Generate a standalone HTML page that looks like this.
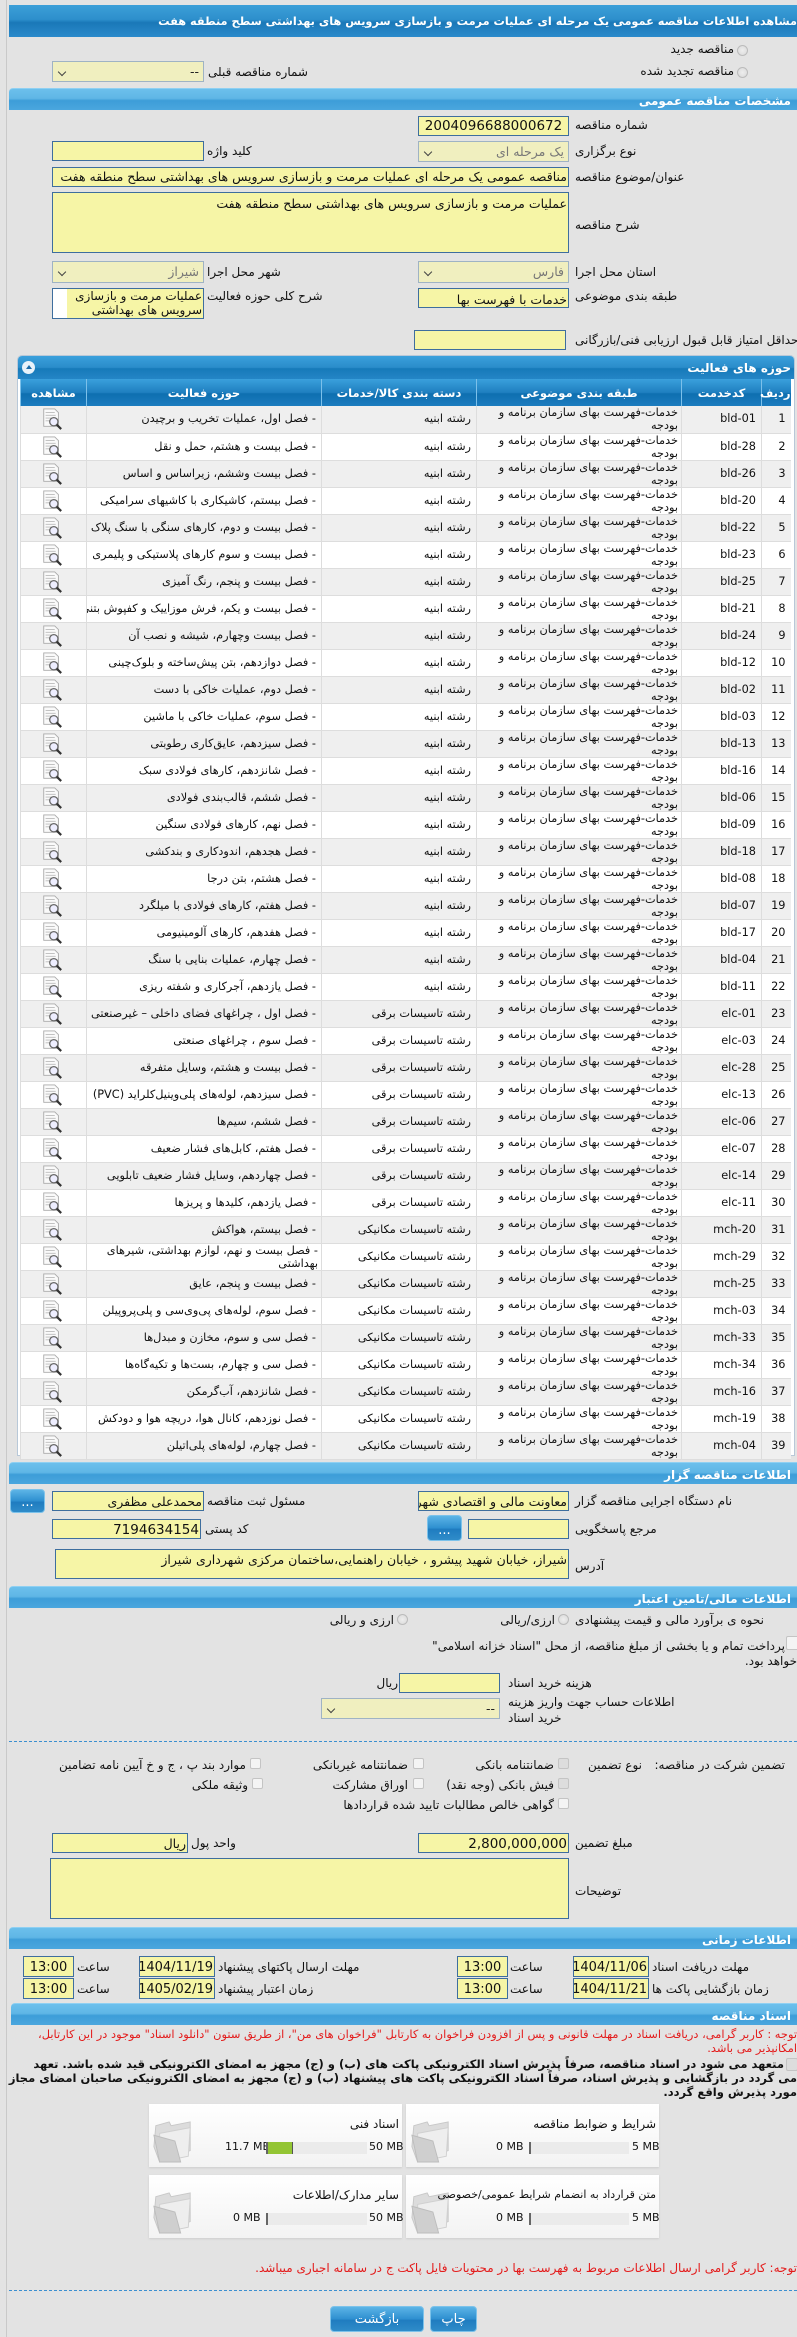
<!DOCTYPE html>
<html><head><meta charset="utf-8">
<style>
*{box-sizing:border-box;margin:0;padding:0}
body{width:797px;height:2337px;background:#e3e3e3;font-family:"DejaVu Sans",sans-serif;font-size:12px;color:#111;position:relative;overflow:hidden}
.a{position:absolute}
.vl{position:absolute;left:6px;top:0;width:1px;height:2337px;background:#c9c9c9}
.bar{position:absolute;left:9px;right:0;height:22px;background:linear-gradient(#6cc0ec 0%,#5fb6e6 45%,#3d9dd8 55%,#4aa6de 100%);border-top:1px solid #8fd0f2;border-radius:4px 0 0 0;color:#fff;font-weight:bold;font-size:12px;direction:rtl;text-align:right;padding-right:6px;line-height:24px}
.tbar{position:absolute;left:9px;right:0;top:5px;height:32px;background:linear-gradient(#3c9fd8 0%,#2d8fcc 45%,#1a78b8 55%,#2a8acb 100%);color:#fff;font-weight:bold;font-size:11.3px;direction:rtl;text-align:right;line-height:34px;white-space:nowrap;overflow:hidden}
.in{position:absolute;background:#f6f5a6;border:1px solid #3e6e9e;direction:rtl;text-align:right;font-size:12.5px;line-height:18px;padding:0 1px;white-space:nowrap;overflow:hidden}
.sel{position:absolute;background:#f0efbf;border:1px solid #9fb3c4;direction:rtl;text-align:right;font-size:12.5px;line-height:20px;padding-right:4px;color:#777;white-space:nowrap}
.sel:after{content:"";position:absolute;left:6px;top:7px;width:5px;height:5px;border-right:1.5px solid #444;border-bottom:1.5px solid #444;transform:rotate(45deg)}
.lb{position:absolute;direction:rtl;white-space:nowrap;font-size:12px}
.ltr{direction:ltr}
.rd{position:absolute;width:11px;height:11px;border-radius:50%;border:1px solid #bbb;background:radial-gradient(#eee,#d8d8d8)}
.cb{position:absolute;width:11px;height:11px;border:1px solid #c4c4c4;background:#f4f4f4;border-radius:2px}
.btn{position:absolute;background:linear-gradient(#5cb4e6,#2e8fd0 50%,#1f7cc0 55%,#2f8cc9);border:1px solid #7cc2ea;border-radius:4px;color:#fff;text-align:center;font-size:13px}
table{position:absolute;left:20px;top:379px;width:770px;border-collapse:collapse;table-layout:fixed;direction:rtl;font-size:11.3px}
th{height:23px;background:linear-gradient(#3aa0dc,#1f7fc0 50%,#0e6fb0 55%,#1c7cbf);color:#fff;font-weight:bold;border-left:1px solid #7cc0ea;font-size:11.5px;padding:0}
tr{height:27px}
td{height:27px;border-left:1px solid #ddd;border-bottom:1px solid #ddd;vertical-align:middle;text-align:right;padding:0 5px;white-space:nowrap;overflow:hidden;line-height:14px}
tr:nth-child(odd) td{background:#fff}
tr:nth-child(even) td{background:#efefef}
td.c{line-height:13px;vertical-align:top;padding-top:0;padding-right:3px}
td.ic{padding:0}
td.ic svg{display:block;margin:0 auto 0 20px}
.fl{position:absolute;width:253px;height:63px;background:linear-gradient(#fff,#f3f3f3);box-shadow:0 1px 2px #ccc}
.pb{position:absolute;height:12px;background:#ebebeb;border-left:2px solid #666}
.dash{position:absolute;left:9px;right:0;height:0;border-top:1px dashed #3b8fd0}
.red{color:#e31b1b}
.dt{font-size:13px;line-height:21px;text-align:center}
</style></head><body>
<div class="vl"></div>
<div class="tbar">مشاهده اطلاعات مناقصه عمومی یک مرحله ای عملیات مرمت و بازسازی سرویس های بهداشتی سطح منطقه هفت</div>

<div class="rd" style="left:737px;top:45px"></div><div class="lb" style="right:63px;top:42px">مناقصه جدید</div>
<div class="rd" style="left:737px;top:67px"></div><div class="lb" style="right:63px;top:64px">مناقصه تجدید شده</div>
<div class="sel" style="left:52px;top:61px;width:152px;height:21px;color:#222">--</div>
<div class="lb" style="left:208px;top:65px">شماره مناقصه قبلی</div>

<div class="bar" style="top:88px">مشخصات مناقصه عمومی</div>
<div class="in" style="left:418px;top:116px;width:151px;height:20px;text-align:center;font-size:13.5px">2004096688000672</div>
<div class="lb" style="left:575px;top:118px">شماره مناقصه</div>
<div class="sel" style="left:418px;top:141px;width:151px;height:21px">یک مرحله ای</div>
<div class="lb" style="left:575px;top:144px">نوع برگزاری</div>
<div class="in" style="left:52px;top:141px;width:152px;height:20px"></div>
<div class="lb" style="left:207px;top:144px">کلید واژه</div>
<div class="in" style="left:52px;top:167px;width:517px;height:20px">مناقصه عمومی یک مرحله ای عملیات مرمت و بازسازی سرویس های بهداشتی سطح منطقه هفت</div>
<div class="lb" style="left:575px;top:170px">عنوان/موضوع مناقصه</div>
<div class="in" style="left:52px;top:192px;width:517px;height:61px;line-height:22px">عملیات مرمت و بازسازی سرویس های بهداشتی سطح منطقه هفت</div>
<div class="lb" style="left:575px;top:218px">شرح مناقصه</div>
<div class="sel" style="left:418px;top:261px;width:151px;height:22px">فارس</div>
<div class="lb" style="left:575px;top:265px">استان محل اجرا</div>
<div class="sel" style="left:52px;top:261px;width:152px;height:22px">شیراز</div>
<div class="lb" style="left:207px;top:265px">شهر محل اجرا</div>
<div class="in" style="left:418px;top:288px;width:151px;height:20px;line-height:22px">خدمات با فهرست بها</div>
<div class="lb" style="left:575px;top:289px">طبقه بندی موضوعی</div>
<div class="in" style="left:52px;top:288px;width:152px;height:31px;line-height:14px;white-space:normal;padding-left:16px;font-size:12px;background:linear-gradient(90deg,#fff 0 14px,#f6f5a6 14px)">عملیات مرمت و بازسازی سرویس های بهداشتی</div>
<div class="lb" style="left:207px;top:289px">شرح کلی حوزه فعالیت</div>
<div class="in" style="left:414px;top:330px;width:152px;height:20px"></div>
<div class="lb" style="left:575px;top:333px">حداقل امتیاز قابل قبول ارزیابی فنی/بازرگانی</div>

<div class="a" style="left:17px;top:355px;width:778px;height:1101px;border:1px solid #b8c8d8;border-radius:5px 5px 0 0;background:#fff"></div>
<div class="a" style="left:18px;top:356px;width:776px;height:23px;background:linear-gradient(#3aa0dc,#2a8cca 50%,#167ab9 55%,#2485c6);border-radius:4px 4px 0 0;color:#fff;font-weight:bold;font-size:12px;direction:rtl;text-align:right;padding-right:3px;line-height:24px">حوزه های فعالیت</div>
<div class="a" style="left:22px;top:361px;width:13px;height:13px;border-radius:50%;background:#e8f2fa"><div class="a" style="left:4px;top:4px;width:0;height:0;border-left:3px solid transparent;border-right:3px solid transparent;border-bottom:4px solid #1a6aa8"></div></div>
<svg width="0" height="0" style="position:absolute"><defs><symbol id="ico" viewBox="0 0 24 26"><path d="M3 2h12l4 4v15H3z" fill="#fafafa" stroke="#aaa"/><path d="M5 6h10M5 9h11M5 12h8M5 15h6" stroke="#bbb"/><circle cx="14" cy="16" r="4.5" fill="#eef" stroke="#666" stroke-width="1.4"/><path d="M17 19l5 5" stroke="#333" stroke-width="2.4"/></symbol></defs></svg>
<table>
<colgroup><col style="width:29px"><col style="width:80px"><col style="width:205px"><col style="width:155px"><col style="width:235px"><col style="width:66px"></colgroup>
<tr><th>ردیف</th><th>کدخدمت</th><th>طبقه بندی موضوعی</th><th>دسته بندی کالا/خدمات</th><th>حوزه فعالیت</th><th>مشاهده</th></tr>
<tr><td>1</td><td>bld-01</td><td class="c">خدمات-فهرست بهای سازمان برنامه و<br>بودجه</td><td>رشته ابنیه</td><td>- فصل اول، عملیات تخریب و برچیدن</td><td class="ic"><svg width="22" height="24"><use href="#ico"/></svg></td></tr>
<tr><td>2</td><td>bld-28</td><td class="c">خدمات-فهرست بهای سازمان برنامه و<br>بودجه</td><td>رشته ابنیه</td><td>- فصل بیست و هشتم، حمل و نقل</td><td class="ic"><svg width="22" height="24"><use href="#ico"/></svg></td></tr>
<tr><td>3</td><td>bld-26</td><td class="c">خدمات-فهرست بهای سازمان برنامه و<br>بودجه</td><td>رشته ابنیه</td><td>- فصل بیست وششم، زیراساس و اساس</td><td class="ic"><svg width="22" height="24"><use href="#ico"/></svg></td></tr>
<tr><td>4</td><td>bld-20</td><td class="c">خدمات-فهرست بهای سازمان برنامه و<br>بودجه</td><td>رشته ابنیه</td><td>- فصل بیستم، کاشیکاری با کاشیهای سرامیکی</td><td class="ic"><svg width="22" height="24"><use href="#ico"/></svg></td></tr>
<tr><td>5</td><td>bld-22</td><td class="c">خدمات-فهرست بهای سازمان برنامه و<br>بودجه</td><td>رشته ابنیه</td><td>- فصل بیست و دوم، کارهای سنگی با سنگ پلاک</td><td class="ic"><svg width="22" height="24"><use href="#ico"/></svg></td></tr>
<tr><td>6</td><td>bld-23</td><td class="c">خدمات-فهرست بهای سازمان برنامه و<br>بودجه</td><td>رشته ابنیه</td><td>- فصل بیست و سوم کارهای پلاستیکی و پلیمری</td><td class="ic"><svg width="22" height="24"><use href="#ico"/></svg></td></tr>
<tr><td>7</td><td>bld-25</td><td class="c">خدمات-فهرست بهای سازمان برنامه و<br>بودجه</td><td>رشته ابنیه</td><td>- فصل بیست و پنجم، رنگ آمیزی</td><td class="ic"><svg width="22" height="24"><use href="#ico"/></svg></td></tr>
<tr><td>8</td><td>bld-21</td><td class="c">خدمات-فهرست بهای سازمان برنامه و<br>بودجه</td><td>رشته ابنیه</td><td>- فصل بیست و یکم، فرش موزاییک و کفپوش بتنی</td><td class="ic"><svg width="22" height="24"><use href="#ico"/></svg></td></tr>
<tr><td>9</td><td>bld-24</td><td class="c">خدمات-فهرست بهای سازمان برنامه و<br>بودجه</td><td>رشته ابنیه</td><td>- فصل بیست وچهارم، شیشه و نصب آن</td><td class="ic"><svg width="22" height="24"><use href="#ico"/></svg></td></tr>
<tr><td>10</td><td>bld-12</td><td class="c">خدمات-فهرست بهای سازمان برنامه و<br>بودجه</td><td>رشته ابنیه</td><td>- فصل دوازدهم، بتن پیش‌ساخته و بلوک‌چینی</td><td class="ic"><svg width="22" height="24"><use href="#ico"/></svg></td></tr>
<tr><td>11</td><td>bld-02</td><td class="c">خدمات-فهرست بهای سازمان برنامه و<br>بودجه</td><td>رشته ابنیه</td><td>- فصل دوم، عملیات خاکی با دست</td><td class="ic"><svg width="22" height="24"><use href="#ico"/></svg></td></tr>
<tr><td>12</td><td>bld-03</td><td class="c">خدمات-فهرست بهای سازمان برنامه و<br>بودجه</td><td>رشته ابنیه</td><td>- فصل سوم، عملیات خاکی با ماشین</td><td class="ic"><svg width="22" height="24"><use href="#ico"/></svg></td></tr>
<tr><td>13</td><td>bld-13</td><td class="c">خدمات-فهرست بهای سازمان برنامه و<br>بودجه</td><td>رشته ابنیه</td><td>- فصل سیزدهم، عایق‌کاری رطوبتی</td><td class="ic"><svg width="22" height="24"><use href="#ico"/></svg></td></tr>
<tr><td>14</td><td>bld-16</td><td class="c">خدمات-فهرست بهای سازمان برنامه و<br>بودجه</td><td>رشته ابنیه</td><td>- فصل شانزدهم، کارهای فولادی سبک</td><td class="ic"><svg width="22" height="24"><use href="#ico"/></svg></td></tr>
<tr><td>15</td><td>bld-06</td><td class="c">خدمات-فهرست بهای سازمان برنامه و<br>بودجه</td><td>رشته ابنیه</td><td>- فصل ششم، قالب‌بندی فولادی</td><td class="ic"><svg width="22" height="24"><use href="#ico"/></svg></td></tr>
<tr><td>16</td><td>bld-09</td><td class="c">خدمات-فهرست بهای سازمان برنامه و<br>بودجه</td><td>رشته ابنیه</td><td>- فصل نهم، کارهای فولادی سنگین</td><td class="ic"><svg width="22" height="24"><use href="#ico"/></svg></td></tr>
<tr><td>17</td><td>bld-18</td><td class="c">خدمات-فهرست بهای سازمان برنامه و<br>بودجه</td><td>رشته ابنیه</td><td>- فصل هجدهم، اندودکاری و بندکشی</td><td class="ic"><svg width="22" height="24"><use href="#ico"/></svg></td></tr>
<tr><td>18</td><td>bld-08</td><td class="c">خدمات-فهرست بهای سازمان برنامه و<br>بودجه</td><td>رشته ابنیه</td><td>- فصل هشتم، بتن درجا</td><td class="ic"><svg width="22" height="24"><use href="#ico"/></svg></td></tr>
<tr><td>19</td><td>bld-07</td><td class="c">خدمات-فهرست بهای سازمان برنامه و<br>بودجه</td><td>رشته ابنیه</td><td>- فصل هفتم، کارهای فولادی با میلگرد</td><td class="ic"><svg width="22" height="24"><use href="#ico"/></svg></td></tr>
<tr><td>20</td><td>bld-17</td><td class="c">خدمات-فهرست بهای سازمان برنامه و<br>بودجه</td><td>رشته ابنیه</td><td>- فصل هفدهم، کارهای آلومینیومی</td><td class="ic"><svg width="22" height="24"><use href="#ico"/></svg></td></tr>
<tr><td>21</td><td>bld-04</td><td class="c">خدمات-فهرست بهای سازمان برنامه و<br>بودجه</td><td>رشته ابنیه</td><td>- فصل چهارم، عملیات بنایی با سنگ</td><td class="ic"><svg width="22" height="24"><use href="#ico"/></svg></td></tr>
<tr><td>22</td><td>bld-11</td><td class="c">خدمات-فهرست بهای سازمان برنامه و<br>بودجه</td><td>رشته ابنیه</td><td>- فصل یازدهم، آجرکاری و شفته ریزی</td><td class="ic"><svg width="22" height="24"><use href="#ico"/></svg></td></tr>
<tr><td>23</td><td>elc-01</td><td class="c">خدمات-فهرست بهای سازمان برنامه و<br>بودجه</td><td>رشته تاسیسات برقی</td><td>- فصل اول ، چراغهای فضای داخلی – غیرصنعتی</td><td class="ic"><svg width="22" height="24"><use href="#ico"/></svg></td></tr>
<tr><td>24</td><td>elc-03</td><td class="c">خدمات-فهرست بهای سازمان برنامه و<br>بودجه</td><td>رشته تاسیسات برقی</td><td>- فصل سوم ، چراغهای صنعتی</td><td class="ic"><svg width="22" height="24"><use href="#ico"/></svg></td></tr>
<tr><td>25</td><td>elc-28</td><td class="c">خدمات-فهرست بهای سازمان برنامه و<br>بودجه</td><td>رشته تاسیسات برقی</td><td>- فصل بیست و هشتم، وسایل متفرقه</td><td class="ic"><svg width="22" height="24"><use href="#ico"/></svg></td></tr>
<tr><td>26</td><td>elc-13</td><td class="c">خدمات-فهرست بهای سازمان برنامه و<br>بودجه</td><td>رشته تاسیسات برقی</td><td>- فصل سیزدهم، لوله‌های پلی‌وینیل‌کلراید (PVC)</td><td class="ic"><svg width="22" height="24"><use href="#ico"/></svg></td></tr>
<tr><td>27</td><td>elc-06</td><td class="c">خدمات-فهرست بهای سازمان برنامه و<br>بودجه</td><td>رشته تاسیسات برقی</td><td>- فصل ششم، سیم‌ها</td><td class="ic"><svg width="22" height="24"><use href="#ico"/></svg></td></tr>
<tr><td>28</td><td>elc-07</td><td class="c">خدمات-فهرست بهای سازمان برنامه و<br>بودجه</td><td>رشته تاسیسات برقی</td><td>- فصل هفتم، کابل‌های فشار ضعیف</td><td class="ic"><svg width="22" height="24"><use href="#ico"/></svg></td></tr>
<tr><td>29</td><td>elc-14</td><td class="c">خدمات-فهرست بهای سازمان برنامه و<br>بودجه</td><td>رشته تاسیسات برقی</td><td>- فصل چهاردهم، وسایل فشار ضعیف تابلویی</td><td class="ic"><svg width="22" height="24"><use href="#ico"/></svg></td></tr>
<tr><td>30</td><td>elc-11</td><td class="c">خدمات-فهرست بهای سازمان برنامه و<br>بودجه</td><td>رشته تاسیسات برقی</td><td>- فصل یازدهم، کلیدها و پریزها</td><td class="ic"><svg width="22" height="24"><use href="#ico"/></svg></td></tr>
<tr><td>31</td><td>mch-20</td><td class="c">خدمات-فهرست بهای سازمان برنامه و<br>بودجه</td><td>رشته تاسیسات مکانیکی</td><td>- فصل بیستم، هواکش</td><td class="ic"><svg width="22" height="24"><use href="#ico"/></svg></td></tr>
<tr><td>32</td><td>mch-29</td><td class="c">خدمات-فهرست بهای سازمان برنامه و<br>بودجه</td><td>رشته تاسیسات مکانیکی</td><td class="c">- فصل بیست و نهم، لوازم بهداشتی، شیرهای<br>بهداشتی</td><td class="ic"><svg width="22" height="24"><use href="#ico"/></svg></td></tr>
<tr><td>33</td><td>mch-25</td><td class="c">خدمات-فهرست بهای سازمان برنامه و<br>بودجه</td><td>رشته تاسیسات مکانیکی</td><td>- فصل بیست و پنجم، عایق</td><td class="ic"><svg width="22" height="24"><use href="#ico"/></svg></td></tr>
<tr><td>34</td><td>mch-03</td><td class="c">خدمات-فهرست بهای سازمان برنامه و<br>بودجه</td><td>رشته تاسیسات مکانیکی</td><td>- فصل سوم، لوله‌های پی‌وی‌سی و پلی‌پروپیلن</td><td class="ic"><svg width="22" height="24"><use href="#ico"/></svg></td></tr>
<tr><td>35</td><td>mch-33</td><td class="c">خدمات-فهرست بهای سازمان برنامه و<br>بودجه</td><td>رشته تاسیسات مکانیکی</td><td>- فصل سی و سوم، مخازن و مبدل‌ها</td><td class="ic"><svg width="22" height="24"><use href="#ico"/></svg></td></tr>
<tr><td>36</td><td>mch-34</td><td class="c">خدمات-فهرست بهای سازمان برنامه و<br>بودجه</td><td>رشته تاسیسات مکانیکی</td><td>- فصل سی و چهارم، بست‌ها و تکیه‌گاه‌ها</td><td class="ic"><svg width="22" height="24"><use href="#ico"/></svg></td></tr>
<tr><td>37</td><td>mch-16</td><td class="c">خدمات-فهرست بهای سازمان برنامه و<br>بودجه</td><td>رشته تاسیسات مکانیکی</td><td>- فصل شانزدهم، آب‌گرمکن</td><td class="ic"><svg width="22" height="24"><use href="#ico"/></svg></td></tr>
<tr><td>38</td><td>mch-19</td><td class="c">خدمات-فهرست بهای سازمان برنامه و<br>بودجه</td><td>رشته تاسیسات مکانیکی</td><td>- فصل نوزدهم، کانال هوا، دریچه هوا و دودکش</td><td class="ic"><svg width="22" height="24"><use href="#ico"/></svg></td></tr>
<tr><td>39</td><td>mch-04</td><td class="c">خدمات-فهرست بهای سازمان برنامه و<br>بودجه</td><td>رشته تاسیسات مکانیکی</td><td>- فصل چهارم، لوله‌های پلی‌اتیلن</td><td class="ic"><svg width="22" height="24"><use href="#ico"/></svg></td></tr>
</table>

<div class="bar" style="top:1462px">اطلاعات مناقصه گزار</div>
<div class="in" style="left:418px;top:1491px;width:151px;height:20px;line-height:20px">معاونت مالی و اقتصادی شهرداری</div>
<div class="lb" style="left:575px;top:1494px">نام دستگاه اجرایی مناقصه گزار</div>
<div class="in" style="left:52px;top:1491px;width:152px;height:20px;line-height:20px">محمدعلی مظفری</div>
<div class="lb" style="left:207px;top:1494px">مسئول ثبت مناقصه</div>
<div class="btn" style="left:10px;top:1489px;width:35px;height:24px;line-height:26px">...</div>
<div class="in" style="left:468px;top:1519px;width:101px;height:20px"></div>
<div class="btn" style="left:427px;top:1515px;width:35px;height:26px;line-height:30px">...</div>
<div class="lb" style="left:575px;top:1522px">مرجع پاسخگویی</div>
<div class="in" style="left:52px;top:1519px;width:149px;height:20px;font-size:13.5px;line-height:20px">7194634154</div>
<div class="lb" style="left:205px;top:1522px">کد پستی</div>
<div class="in" style="left:55px;top:1549px;width:514px;height:30px;line-height:20px">شیراز، خیابان شهید پیشرو ، خیابان راهنمایی،ساختمان مرکزی شهرداری شیراز</div>
<div class="lb" style="left:575px;top:1559px">آدرس</div>

<div class="bar" style="top:1586px">اطلاعات مالی/تامین اعتبار</div>
<div class="lb" style="left:575px;top:1613px">نحوه ی برآورد مالی و قیمت پیشنهادی</div>
<div class="rd" style="left:558px;top:1614px"></div><div class="lb" style="right:242px;top:1613px">ارزی/ریالی</div>
<div class="rd" style="left:397px;top:1614px"></div><div class="lb" style="right:403px;top:1613px">ارزی و ریالی</div>
<div class="cb" style="left:786px;top:1636px;width:14px;height:14px"></div>
<div class="lb" style="right:12px;top:1639px">پرداخت تمام و یا بخشی از مبلغ مناقصه، از محل "اسناد خزانه اسلامی"</div>
<div class="lb" style="right:0;top:1654px">خواهد بود.</div>
<div class="in" style="left:399px;top:1673px;width:101px;height:20px"></div>
<div class="lb" style="right:399px;top:1676px">ریال</div>
<div class="lb" style="left:508px;top:1676px">هزینه خرید اسناد</div>
<div class="sel" style="left:321px;top:1698px;width:179px;height:21px;color:#222">--</div>
<div class="lb" style="left:508px;top:1695px">اطلاعات حساب جهت واریز هزینه</div>
<div class="lb" style="left:508px;top:1711px">خرید اسناد</div>
<div class="dash" style="top:1741px"></div>
<div class="lb" style="right:12px;top:1758px">تضمین شرکت در مناقصه:</div>
<div class="lb" style="right:155px;top:1758px">نوع تضمین</div>
<div class="cb" style="left:558px;top:1758px;background:#ddd"></div><div class="lb" style="right:243px;top:1758px">ضمانتنامه بانکی</div>
<div class="cb" style="left:413px;top:1758px"></div><div class="lb" style="right:389px;top:1758px">ضمانتنامه غیربانکی</div>
<div class="cb" style="left:250px;top:1758px"></div><div class="lb" style="right:551px;top:1758px">موارد بند پ ، ج و خ آیین نامه تضامین</div>
<div class="cb" style="left:558px;top:1778px;background:#ddd"></div><div class="lb" style="right:243px;top:1778px">فیش بانکی (وجه نقد)</div>
<div class="cb" style="left:413px;top:1778px"></div><div class="lb" style="right:389px;top:1778px">اوراق مشارکت</div>
<div class="cb" style="left:252px;top:1778px"></div><div class="lb" style="right:549px;top:1778px">وثیقه ملکی</div>
<div class="cb" style="left:558px;top:1798px"></div><div class="lb" style="right:243px;top:1798px">گواهی خالص مطالبات تایید شده قراردادها</div>
<div class="in" style="left:418px;top:1833px;width:151px;height:20px;font-size:13.5px;line-height:20px">2,800,000,000</div>
<div class="lb" style="left:575px;top:1836px">مبلغ تضمین</div>
<div class="in" style="left:52px;top:1833px;width:136px;height:20px;line-height:20px">ریال</div>
<div class="lb" style="left:191px;top:1836px">واحد پول</div>
<div class="in" style="left:50px;top:1858px;width:519px;height:61px"></div>
<div class="lb" style="left:575px;top:1884px">توضیحات</div>

<div class="bar" style="top:1927px">اطلاعات زمانی</div>
<div class="in dt" style="left:573px;top:1956px;width:76px;height:21px">1404/11/06</div>
<div class="lb" style="left:652px;top:1960px">مهلت دریافت اسناد</div>
<div class="lb" style="left:510px;top:1960px">ساعت</div>
<div class="in dt" style="left:457px;top:1956px;width:51px;height:21px">13:00</div>
<div class="in dt" style="left:139px;top:1956px;width:76px;height:21px">1404/11/19</div>
<div class="lb" style="left:218px;top:1960px">مهلت ارسال پاکتهای پیشنهاد</div>
<div class="lb" style="left:77px;top:1960px">ساعت</div>
<div class="in dt" style="left:23px;top:1956px;width:51px;height:21px">13:00</div>
<div class="in dt" style="left:573px;top:1978px;width:76px;height:21px">1404/11/21</div>
<div class="lb" style="left:652px;top:1982px">زمان بازگشایی پاکت ها</div>
<div class="lb" style="left:510px;top:1982px">ساعت</div>
<div class="in dt" style="left:457px;top:1978px;width:51px;height:21px">13:00</div>
<div class="in dt" style="left:139px;top:1978px;width:76px;height:21px">1405/02/19</div>
<div class="lb" style="left:218px;top:1982px">زمان اعتبار پیشنهاد</div>
<div class="lb" style="left:77px;top:1982px">ساعت</div>
<div class="in dt" style="left:23px;top:1978px;width:51px;height:21px">13:00</div>

<div class="bar" style="top:2003px;left:11px">اسناد مناقصه</div>
<div class="lb red" style="right:0;top:2027px;font-size:11.4px">توجه : کاربر گرامی، دریافت اسناد در مهلت قانونی و پس از افزودن فراخوان به کارتابل "فراخوان های من"، از طریق ستون "دانلود اسناد" موجود در این کارتابل،</div>
<div class="lb red" style="right:0;top:2041px;font-size:11.4px">امکانپذیر می باشد.</div>
<div class="cb" style="left:786px;top:2058px;width:12px;height:13px;background:#ddd"></div>
<div class="a" style="right:13px;top:2057px;width:770px;direction:rtl;text-align:right;font-weight:bold;font-size:11.5px;line-height:14px;white-space:nowrap">متعهد می شود در اسناد مناقصه، صرفاً پذیرش اسناد الکترونیکی پاکت های (ب) و (ج) مجهز به امضای الکترونیکی قید شده باشد. تعهد</div>
<div class="a" style="right:0;top:2071px;width:790px;direction:rtl;text-align:right;font-weight:bold;font-size:11.5px;line-height:14px;white-space:nowrap">می گردد در بازگشایی و پذیرش اسناد، صرفاً اسناد الکترونیکی پاکت های پیشنهاد (ب) و (ج) مجهز به امضای الکترونیکی صاحبان امضای مجاز</div>
<div class="a" style="right:0;top:2085px;direction:rtl;text-align:right;font-weight:bold;font-size:11.5px;line-height:14px;white-space:nowrap">مورد پذیرش واقع گردد.</div>

<svg width="0" height="0" style="position:absolute"><defs><symbol id="fold" viewBox="0 0 44 52"><path d="M4 10l14-4 2 4 20-4v30L8 48 2 32z" fill="#dcdcdc" stroke="#c8c8c8"/><path d="M8 18l32-6-2 30-30 6z" fill="#eee" stroke="#d0d0d0"/><path d="M2 20l22 6 6 22-22 0z" fill="#cfcfcf" stroke="#bdbdbd"/></symbol></defs></svg>
<div class="fl" style="left:149px;top:2104px"><svg class="a" style="left:3px;top:12px" width="42" height="50"><use href="#fold"/></svg><div class="lb" style="right:3px;top:13px;font-size:12px">اسناد فنی</div><div class="lb ltr" style="left:76px;top:36px;font-size:11px">11.7 MB</div><div class="pb" style="left:117px;top:38px;width:101px"><div class="a" style="left:0;top:0;width:25px;height:12px;background:#93c534;border-right:1px solid #555"></div></div><div class="lb ltr" style="left:220px;top:36px;font-size:11px">50 MB</div></div>
<div class="fl" style="left:406px;top:2104px"><svg class="a" style="left:4px;top:12px" width="42" height="50"><use href="#fold"/></svg><div class="lb" style="right:3px;top:13px;font-size:12px">شرایط و ضوابط مناقصه</div><div class="lb ltr" style="left:90px;top:36px;font-size:11px">0 MB</div><div class="pb" style="left:123px;top:38px;width:100px"></div><div class="lb ltr" style="left:226px;top:36px;font-size:11px">5 MB</div></div>
<div class="fl" style="left:149px;top:2175px"><svg class="a" style="left:3px;top:12px" width="42" height="50"><use href="#fold"/></svg><div class="lb" style="right:3px;top:13px;font-size:12px">سایر مدارک/اطلاعات</div><div class="lb ltr" style="left:84px;top:36px;font-size:11px">0 MB</div><div class="pb" style="left:117px;top:38px;width:101px"></div><div class="lb ltr" style="left:220px;top:36px;font-size:11px">50 MB</div></div>
<div class="fl" style="left:406px;top:2175px"><svg class="a" style="left:4px;top:12px" width="42" height="50"><use href="#fold"/></svg><div class="lb" style="right:3px;top:13px;font-size:11px">متن قرارداد به انضمام شرایط عمومی/خصوصی</div><div class="lb ltr" style="left:90px;top:36px;font-size:11px">0 MB</div><div class="pb" style="left:123px;top:38px;width:100px"></div><div class="lb ltr" style="left:226px;top:36px;font-size:11px">5 MB</div></div>

<div class="lb red" style="right:0;top:2261px;font-size:12px">توجه: کاربر گرامی ارسال اطلاعات مربوط به فهرست بها در محتویات فایل پاکت ج در سامانه اجباری میباشد.</div>
<div class="dash" style="top:2290px"></div>
<div class="btn" style="left:330px;top:2306px;width:94px;height:26px;line-height:26px">بازگشت</div>
<div class="btn" style="left:430px;top:2306px;width:47px;height:26px;line-height:26px">چاپ</div>
</body></html>
